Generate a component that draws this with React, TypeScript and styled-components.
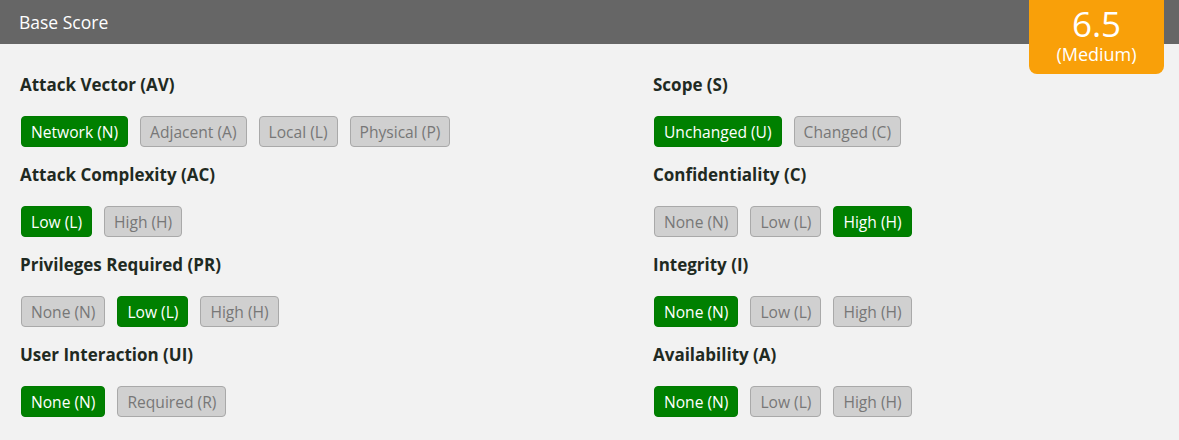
import * as React from 'react'
import styled, { createGlobalStyle } from 'styled-components'

type Metric = {
  name: string
  options: string[]
  selected: number
}

const left: Metric[] = [
  { name: 'Attack Vector (AV)', options: ['Network (N)', 'Adjacent (A)', 'Local (L)', 'Physical (P)'], selected: 0 },
  { name: 'Attack Complexity (AC)', options: ['Low (L)', 'High (H)'], selected: 0 },
  { name: 'Privileges Required (PR)', options: ['None (N)', 'Low (L)', 'High (H)'], selected: 1 },
  { name: 'User Interaction (UI)', options: ['None (N)', 'Required (R)'], selected: 0 },
]

const right: Metric[] = [
  { name: 'Scope (S)', options: ['Unchanged (U)', 'Changed (C)'], selected: 0 },
  { name: 'Confidentiality (C)', options: ['None (N)', 'Low (L)', 'High (H)'], selected: 2 },
  { name: 'Integrity (I)', options: ['None (N)', 'Low (L)', 'High (H)'], selected: 0 },
  { name: 'Availability (A)', options: ['None (N)', 'Low (L)', 'High (H)'], selected: 0 },
]

const GlobalStyle = createGlobalStyle`
  html, body {
    margin: 0;
    padding: 0;
    background: #f2f2f2;
    font-family: "Open Sans", "Noto Sans", sans-serif;
  }
`

const Panel = styled.div`
  position: relative;
  width: 1179px;
  height: 440px;
  background: #f2f2f2;
  overflow: hidden;
`

const Header = styled.div`
  height: 44px;
  background: #666666;
  color: #ffffff;
  font-size: 17.5px;
  display: flex;
  align-items: center;
  padding-left: 19px;
`

const ScoreBadge = styled.div`
  position: absolute;
  top: 0;
  left: 1029px;
  width: 135px;
  height: 74px;
  background: #f9a009;
  border-radius: 0 0 8px 8px;
  color: #ffffff;
  display: flex;
  flex-direction: column;
  align-items: center;
`

const ScoreValue = styled.span`
  font-size: 35px;
  line-height: 35px;
  margin-top: 6px;
`

const ScoreLabel = styled.span`
  font-size: 18px;
  line-height: 18px;
  margin-top: 4px;
`

const Columns = styled.div`
  display: grid;
  grid-template-columns: 633px 1fr;
  padding: 0 0 0 20px;
`

const Column = styled.div`
  display: flex;
  flex-direction: column;
`

const Group = styled.div`
  height: 90px;
  display: flex;
  flex-direction: column;
`

const Label = styled.div`
  font-size: 17px;
  font-weight: 700;
  color: #1f2a22;
  margin-top: 30px;
  line-height: 22px;
  height: 22px;
`

const Options = styled.div`
  display: flex;
  gap: 12px;
  margin-top: 20px;
  margin-left: 1px;
`

const Option = styled.button<{ $active: boolean }>`
  font-family: inherit;
  font-size: 15.6px;
  height: 31px;
  padding: 0 9px;
  border-radius: 4px;
  border: 1px solid ${({ $active }) => ($active ? '#007a00' : '#a9a9a9')};
  background: ${({ $active }) => ($active ? '#008000' : '#d0d0d0')};
  color: ${({ $active }) => ($active ? '#ffffff' : '#777777')};
  cursor: pointer;
`

const MetricGroup = ({ metric }: { metric: Metric }) => (
  <Group>
    <Label>{metric.name}</Label>
    <Options>
      {metric.options.map((o, i) => (
        <Option key={o} $active={i === metric.selected}>
          {o}
        </Option>
      ))}
    </Options>
  </Group>
)

export default function App() {
  return (
    <Panel>
      <GlobalStyle />
      <Header>Base Score</Header>
      <ScoreBadge>
        <ScoreValue>6.5</ScoreValue>
        <ScoreLabel>(Medium)</ScoreLabel>
      </ScoreBadge>
      <Columns>
        <Column>
          {left.map((m) => (
            <MetricGroup key={m.name} metric={m} />
          ))}
        </Column>
        <Column>
          {right.map((m) => (
            <MetricGroup key={m.name} metric={m} />
          ))}
        </Column>
      </Columns>
    </Panel>
  )
}
